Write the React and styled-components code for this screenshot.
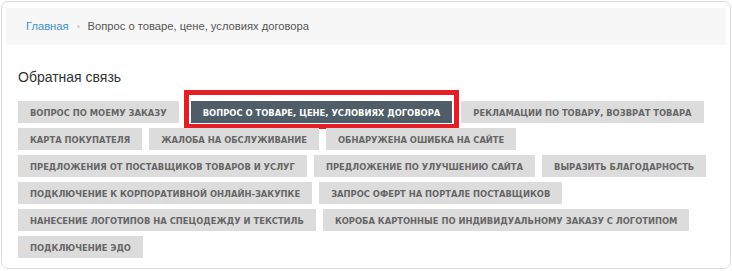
import React from 'react';
import styled, { createGlobalStyle } from 'styled-components';

const GlobalStyle = createGlobalStyle`
    body {
        margin: 0;
        background: #ffffff;
        font-family: 'Liberation Sans', Arial, sans-serif;
    }
`;

const Card = styled.div`
    box-sizing: border-box;
    width: 730px;
    height: 268px;
    margin: 1px 0 0 1px;
    border: 1px solid #dcdcdc;
    border-radius: 7px;
    padding: 6px 4px 0 4px;
`;

const Breadcrumbs = styled.nav`
    display: flex;
    align-items: center;
    height: 36px;
    padding: 0 0 1px 20px;
    background: #f7f7f7;
    font-size: 11.2px;
    color: #555;
`;

const Crumb = styled.a`
    color: #3d8fcc;
    text-decoration: none;
`;

const Sep = styled.span`
    width: 3px;
    height: 3px;
    border-radius: 50%;
    background: #d5d5d5;
    margin: 1px 8px 0 8px;
`;

const Section = styled.section`
    padding: 0 0 0 12px;
`;

const Title = styled.h2`
    margin: 22px 0 14px 0;
    font-size: 14px;
    font-weight: 400;
    color: #333;
    line-height: 20px;
`;

const Topics = styled.div`
    display: flex;
    flex-wrap: wrap;
    gap: 5px 7px;
    max-width: 700px;
`;

const Topic = styled.button`
    position: relative;
    height: 22px;
    padding: 0 12px 0 12px;
    margin: ${(p) => (p.$active ? '0 2px 0 5px' : '0')};
    border: 0;
    background: ${(p) => (p.$active ? '#4e5d68' : '#dcdcdc')};
    color: ${(p) => (p.$active ? '#ffffff' : '#666')};
    font-family: 'DejaVu Sans Condensed', 'DejaVu Sans', sans-serif;
    font-weight: bold;
    font-size: 9.3px;
    text-transform: uppercase;
    white-space: nowrap;
    cursor: pointer;

    &::after {
        content: '';
        display: ${(p) => (p.$marked ? 'block' : 'none')};
        position: absolute;
        top: -11px;
        left: -7px;
        right: -7px;
        bottom: -6px;
        border: 5px solid #e31e24;
    }
`;

const topics = [
    'Вопрос по моему заказу',
    'Вопрос о товаре, цене, условиях договора',
    'Рекламации по товару, возврат товара',
    'Карта покупателя',
    'Жалоба на обслуживание',
    'Обнаружена ошибка на сайте',
    'Предложения от поставщиков товаров и услуг',
    'Предложение по улучшению сайта',
    'Выразить благодарность',
    'Подключение к корпоративной онлайн-закупке',
    'Запрос оферт на портале поставщиков',
    'Нанесение логотипов на спецодежду и текстиль',
    'Короба картонные по индивидуальному заказу с логотипом',
    'Подключение ЭДО',
];

export default function App() {
    const current = 1;
    return (
        <>
            <GlobalStyle />
            <Card>
                <Breadcrumbs>
                    <Crumb href="#">Главная</Crumb>
                    <Sep />
                    <span>{topics[current]}</span>
                </Breadcrumbs>
                <Section>
                    <Title>Обратная связь</Title>
                    <Topics>
                        {topics.map((t, i) => (
                            <Topic key={t} $active={i === current} $marked={i === current}>
                                {t}
                            </Topic>
                        ))}
                    </Topics>
                </Section>
            </Card>
        </>
    );
}
